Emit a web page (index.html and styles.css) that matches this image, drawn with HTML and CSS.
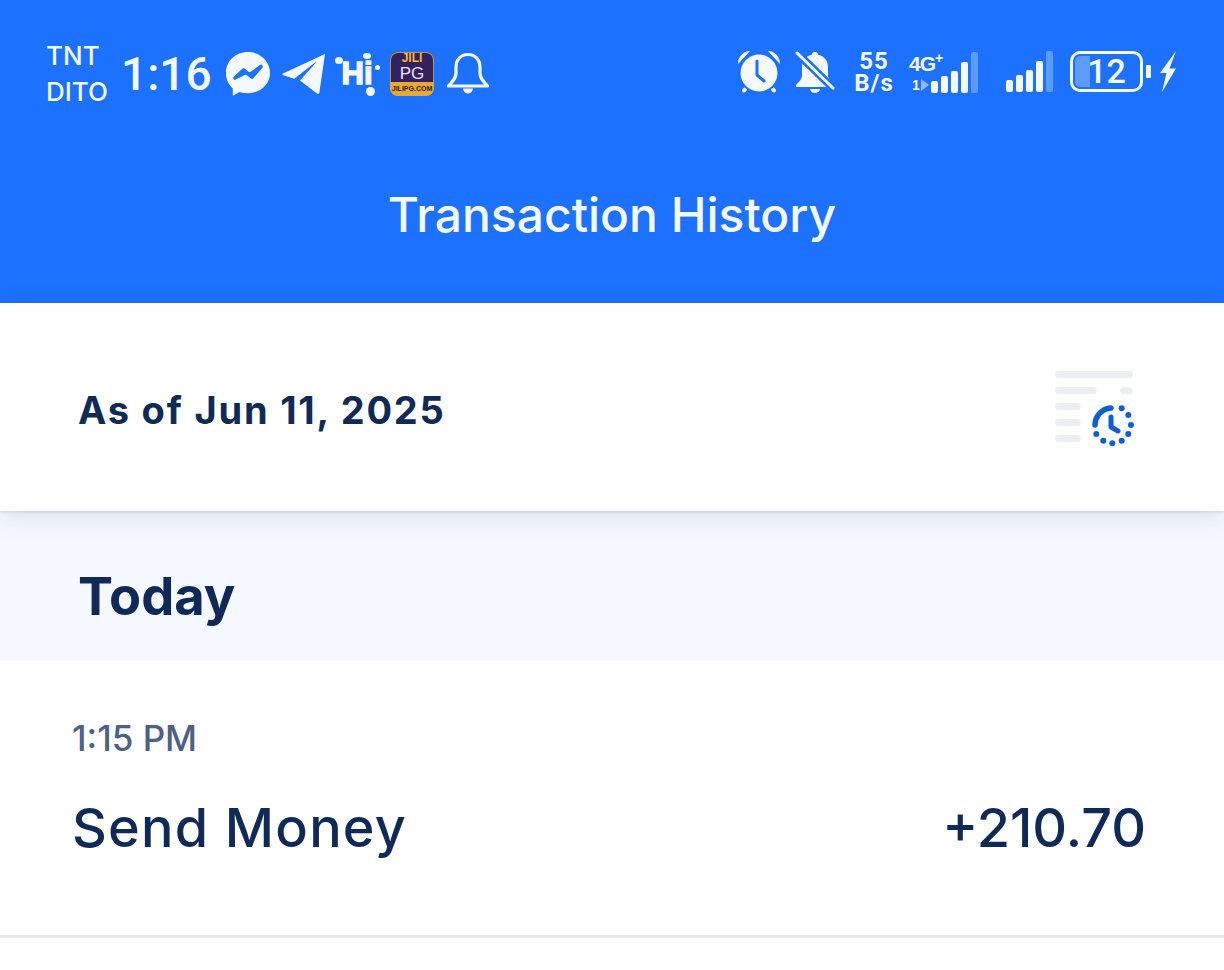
FILE: index.html
```html
<!doctype html>
<html lang="en">
  <head>
    <meta charset="UTF-8" />
    <meta name="viewport" content="width=device-width, initial-scale=1.0" />
    <title>Transaction History</title>
    <link rel="stylesheet" href="styles.css">
  </head>
  <body>
    <header class="header">
      <div class="status-bar">
        <div class="status-left">
          <div class="carrier"><span>TNT</span><span>DITO</span></div>
          <span class="clock">1:16</span>
          <svg class="icon-messenger" width="46" height="46" viewBox="0 0 46 46">
            <path fill="#f4f8ff" d="M23 1C10.600 1 1 10 1 22c0 6.300 2.600 11.700 6.800 15.500v7.200l6.700-3.700c2.600.8 5.500 1.200 8.500 1.200 12.400 0 22-9 22-20.200S35.400 1 23 1z"/>
            <path fill="none" stroke="#1c71fe" stroke-width="3.600" stroke-linecap="round" stroke-linejoin="round" d="M10 27l8.500-8 6 4.800L36 15.500 27 26l-6-4.600z"/>
          </svg>
          <svg class="icon-telegram" width="44" height="42" viewBox="0 0 44 42">
            <path fill="#f4f8ff" d="M43 1L1 20.500c-.8.600-.6 1.400.3 1.700l11 3.500L33 9.500c.6-.4 1 .1.600.5L18 27.500l17 13c1 .7 2.100.2 2.400-1z"/>
          </svg>
          <div class="hi-badge">
            <span class="hi-text">Hi</span>
            <i class="dot dot-a"></i><i class="dot dot-b"></i><i class="dot dot-c"></i><i class="dot dot-d"></i>
          </div>
          <div class="game-icon">
            <span class="game-top">JILI</span>
            <span class="game-mid">PG</span>
            <span class="game-foot">JILIPG.COM</span>
          </div>
          <svg class="icon-bell" width="44" height="44" viewBox="0 0 44 44">
            <path fill="none" stroke="#f4f8ff" stroke-width="3.200" stroke-linejoin="round" d="M22 2.500c-7.500 0-12 5.500-12 13v6c0 4.500-3 7.500-7.500 12.500h39C37 29 34 26 34 21.500v-6c0-7.500-4.500-13-12-13z"/>
            <path fill="#f4f8ff" d="M17 36.500h10c-.6 3.400-2.500 5-5 5s-4.400-1.600-5-5z"/>
          </svg>
        </div>
        <div class="status-right">
          <svg class="icon-alarm" width="42" height="42" viewBox="0 0 42 42">
            <path fill="#f4f8ff" d="M0 13C0 6 5 0 12 0zM42 13c0-7-5-13-12-13z"/>
            <path fill="none" stroke="#f4f8ff" stroke-width="4" stroke-linecap="round" d="M9 36l-3 3.500M33 36l3 3.500"/>
            <circle cx="21" cy="22" r="20.500" fill="#1c71fe"/>
            <circle cx="21" cy="22" r="18.500" fill="#f4f8ff"/>
            <path fill="none" stroke="#1c71fe" stroke-width="3" stroke-linecap="round" stroke-linejoin="round" d="M19 10v14l7 6"/>
          </svg>
          <svg class="icon-muted" width="40" height="42" viewBox="0 0 40 42">
            <path fill="#f4f8ff" d="M20 1c-2 0-3 1.200-3.300 2.800C10 5.500 7 10.500 7 16v8c0 4-3 7-6 10v2h38v-2c-3-3-6-6-6-10v-8c0-5.500-3-10.500-9.700-12.200C23 2.200 22 1 20 1z"/>
            <path fill="#f4f8ff" d="M15 38h10c-.4 2.400-2.600 4-5 4s-4.600-1.600-5-4z"/>
            <path stroke="#1c71fe" stroke-width="8" d="M1 1l38 37"/>
            <path stroke="#f4f8ff" stroke-width="3" stroke-linecap="round" d="M2 2l36 35"/>
          </svg>
          <div class="net-speed">55<br>B/s</div>
          <div class="signal-4g">
            <div class="net-type">
              <span class="net-label">4G<sup>+</sup></span>
              <span class="net-arrows">1<svg width="10" height="12" viewBox="0 0 10 12"><path fill="#8fb8ff" d="M1 0l8 6-8 6z"/></svg></span>
            </div>
            <div class="bars bars-4g">
              <i class="bar h1"></i><i class="bar h2"></i><i class="bar h3"></i><i class="bar h4"></i><i class="bar h5 off"></i>
            </div>
          </div>
          <div class="bars bars-sim2">
            <i class="bar h1"></i><i class="bar h2"></i><i class="bar h3"></i><i class="bar h4"></i><i class="bar h5 off"></i>
          </div>
          <div class="battery">
            <div class="battery-body">
              <div class="battery-fill"></div>
              <span class="battery-level">12</span>
            </div>
            <i class="battery-nub"></i>
            <svg class="icon-bolt" width="18" height="42" viewBox="0 0 18 42">
              <path fill="#f4f8ff" d="M17 0L1 22h6.500L3 41l14-23.500h-6.500z"/>
            </svg>
          </div>
        </div>
      </div>
      <h1 class="title">Transaction History</h1>
    </header>

    <section class="as-of">
      <span class="as-of-date">As of Jun 11, 2025</span>
      <svg class="icon-history" width="80" height="78" viewBox="0 0 80 78">
        <g fill="#eceef1">
          <rect x="1" y="2" width="78" height="7" rx="3.500"/>
          <rect x="1" y="18" width="42" height="7" rx="3.500"/>
          <rect x="66" y="18" width="13" height="7" rx="3.500"/>
          <rect x="1" y="34" width="26" height="7" rx="3.500"/>
          <rect x="1" y="50" width="26" height="7" rx="3.500"/>
          <rect x="1" y="66" width="26" height="7" rx="3.500"/>
        </g>
        <path fill="none" stroke="#0f5fd2" stroke-width="5.500" stroke-linecap="round" d="M41 56A17 17 0 0 1 57 39"/>
        <path fill="none" stroke="#0f5fd2" stroke-width="5" stroke-linecap="round" stroke-linejoin="round" d="M57 48v10l7 4"/>
        <g fill="#0f5fd2">
          <circle cx="67.700" cy="39.300" r="3"/>
          <circle cx="74.300" cy="46" r="3"/>
          <circle cx="77" cy="56" r="3"/>
          <circle cx="74.300" cy="65" r="3"/>
          <circle cx="67.700" cy="71.700" r="3"/>
          <circle cx="58.300" cy="74.300" r="3"/>
          <circle cx="49.300" cy="71.700" r="3"/>
          <circle cx="42.300" cy="65" r="3"/>
        </g>
      </svg>
    </section>

    <section class="day-heading">
      <h2>Today</h2>
    </section>

    <section class="transaction">
      <div class="transaction-time">1:15 PM</div>
      <div class="transaction-main">
        <span class="transaction-name">Send Money</span>
        <span class="transaction-amount">+210.70</span>
      </div>
    </section>
  </body>
</html>
```

FILE: styles.css
```css
* {
  box-sizing: border-box;
}
body {
  margin: 0;
  font-family: Inter, "Open Sans", sans-serif;
  background: white;
  color: #0f2a56;
}
svg {
  display: block;
  flex: none;
}

/* blue header */
.header {
  height: 303px;
  background: #1c71fe;
  color: #f4f8ff;
  padding-top: 44px;
}
.status-bar {
  height: 60px;
  padding: 0 47px 0 46px;
  display: flex;
  justify-content: space-between;
  align-items: center;
}
.status-left,
.status-right {
  display: flex;
  align-items: center;
}
.carrier {
  display: flex;
  flex-direction: column;
  font-size: 26px;
  font-weight: 500;
  line-height: 36px;
  width: 75px;
}
.clock {
  font-family: Roboto, sans-serif;
  font-weight: 500;
  font-size: 46px;
  width: 104px;
}
.icon-telegram {
  margin-left: 11px;
}
.hi-badge {
  position: relative;
  width: 46px;
  height: 46px;
  margin-left: 8px;
  text-align: center;
}
.hi-text {
  font-family: "Liberation Sans", sans-serif;
  font-weight: bold;
  font-size: 31px;
  line-height: 46px;
  -webkit-text-stroke: 1.5px #f4f8ff;
}
.dot {
  position: absolute;
  background: #f4f8ff;
  border-radius: 50%;
}
.dot-a {
  left: 1px;
  top: 6px;
  width: 8px;
  height: 7px;
}
.dot-b {
  right: 9px;
  top: 2px;
  width: 8px;
  height: 6px;
}
.dot-c {
  right: 5px;
  bottom: 1px;
  width: 9px;
  height: 9px;
}
.dot-d {
  right: 0;
  top: 14px;
  width: 5px;
  height: 5px;
}
.game-icon {
  width: 44px;
  height: 44px;
  margin-left: 10px;
  border-radius: 8px;
  background: #33205e;
  box-shadow: inset 0 0 0 1px #c89a3a;
  display: flex;
  flex-direction: column;
  align-items: center;
  overflow: hidden;
  font-family: "Liberation Sans", sans-serif;
  text-align: center;
}
.game-top {
  color: #f4bb3e;
  font-weight: bold;
  font-size: 12px;
  line-height: 13px;
}
.game-mid {
  color: #e9e2f2;
  font-size: 17px;
  line-height: 17px;
}
.game-foot {
  width: 100%;
  background: #e7a92f;
  color: #2c1a3e;
  font-weight: bold;
  font-size: 7px;
  line-height: 14px;
}
.icon-bell {
  margin-left: 12px;
}
.status-right {
  height: 46px;
  margin-bottom: 5px;
}
.icon-muted {
  margin-left: 15px;
}
.net-speed {
  width: 44px;
  margin-left: 17px;
  text-align: center;
  font-family: Roboto, sans-serif;
  font-weight: 700;
  font-size: 24px;
  line-height: 22px;
  letter-spacing: 1px;
}
.signal-4g {
  display: flex;
  align-items: flex-end;
  margin-left: 13px;
}
.net-type {
  display: flex;
  flex-direction: column;
  width: 22px;
  white-space: nowrap;
}
.net-label {
  font-family: "Liberation Sans", sans-serif;
  font-weight: bold;
  font-size: 21px;
  line-height: 26px;
  letter-spacing: -1px;
}
.net-label sup {
  font-size: 14px;
  line-height: 0;
}
.net-arrows {
  display: flex;
  align-items: center;
  font-family: "Liberation Sans", sans-serif;
  font-weight: bold;
  font-size: 14px;
  line-height: 16px;
  padding-left: 3px;
}
.bars {
  display: flex;
  align-items: flex-end;
  gap: 3px;
}
.bar {
  width: 7px;
  background: #f4f8ff;
  border-radius: 2px;
}
.bar.off {
  background: #5d9bff;
}
.h1 {
  height: 12px;
}
.h2 {
  height: 17px;
}
.h3 {
  height: 22px;
}
.h4 {
  height: 31px;
}
.h5 {
  height: 41px;
}
.bars-sim2 {
  margin-left: 28px;
}
.battery {
  display: flex;
  align-items: center;
  margin-left: 17px;
}
.battery-body {
  position: relative;
  width: 73px;
  height: 41px;
  border: 3px solid #f4f8ff;
  border-radius: 10px;
  overflow: hidden;
  text-align: center;
}
.battery-fill {
  position: absolute;
  left: 2px;
  top: 2px;
  bottom: 2px;
  width: 15px;
  background: #5d9bff;
  border-radius: 5px 0 0 5px;
}
.battery-level {
  position: relative;
  font-family: Roboto, sans-serif;
  font-weight: 500;
  font-size: 34px;
  line-height: 35px;
}
.battery-nub {
  width: 5px;
  height: 13px;
  margin-left: 3px;
  background: #f4f8ff;
  border-radius: 1px;
}
.icon-bolt {
  margin-left: 8px;
}
.title {
  margin: 0;
  padding-top: 81px;
  text-align: center;
  font-weight: 500;
  font-size: 48px;
  line-height: 60px;
}

/* date row */
.as-of {
  position: relative;
  height: 208px;
  padding: 0 90px 0 78px;
  display: flex;
  justify-content: space-between;
  align-items: center;
  box-shadow: 0 1px 3px rgba(20, 40, 80, 0.16), 0 6px 26px rgba(20, 40, 80, 0.1);
}
.as-of-date {
  padding-top: 5px;
  font-weight: 700;
  font-size: 38px;
  letter-spacing: 1.8px;
}
.icon-history {
  margin-top: 2px;
}

/* group heading */
.day-heading {
  height: 150px;
  background: #f5f8fe;
  padding: 20px 78px 0;
  display: flex;
  align-items: center;
}
.day-heading h2 {
  margin: 0;
  font-weight: 700;
  font-size: 52.500px;
}

/* list row */
.transaction {
  height: 277px;
  padding: 52px 78px 0 72px;
  border-bottom: 3px solid #e6e8ec;
}
.transaction-time {
  font-size: 35px;
  font-weight: 500;
  line-height: 50px;
  color: #4c6184;
}
.transaction-main {
  display: flex;
  justify-content: space-between;
  align-items: center;
  margin-top: 33px;
  font-weight: 500;
  font-size: 54px;
  line-height: 64px;
}
.transaction-name {
  letter-spacing: 1.2px;
}
```
